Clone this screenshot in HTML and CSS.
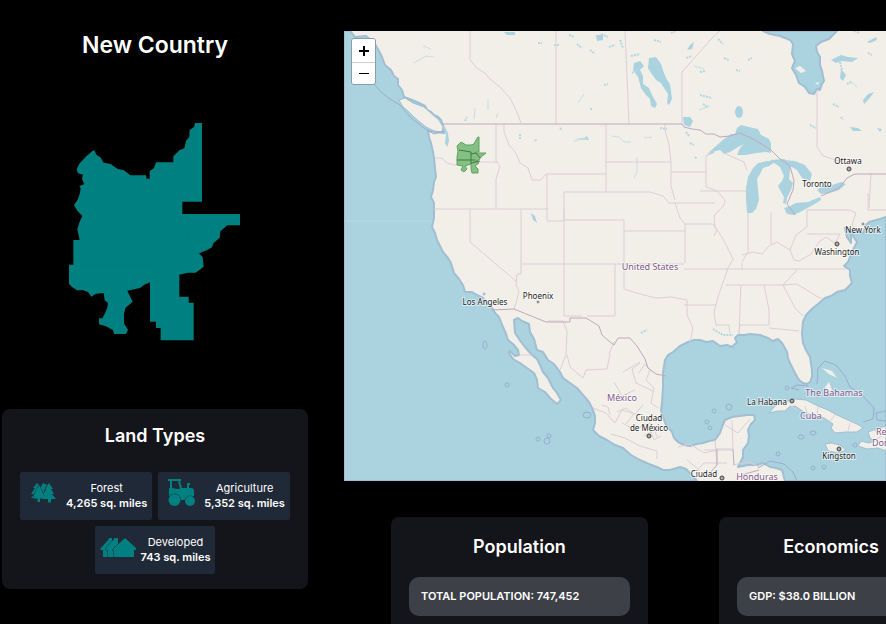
FILE: index.html
```html
<!DOCTYPE html>
<html lang="en">
<head>
<meta charset="utf-8">
<title>New Country</title>
<link rel="stylesheet" href="styles.css">
</head>
<body>
<main class="layout">
  <section class="side">
    <h1 class="title">New Country</h1>
    <svg class="shape" viewBox="57 39 516 654" role="img" aria-label="Country outline">
      <path class="fill" d="M435 39H456V275H397V312H570V346H532L511 364L509 383L490 400L486 412L470 421L447 430L458 442L461 470L437 488L414 488L388 494V560H416V578H431V691H332V654H318V635H300V517L283 524L270 534L232 542L248 575L226 594L222 612V640L234 660L228 672H192L189 660L168 649L147 643V625H157L165 610L172 593L174 579L164 571L161 549L138 551L124 560L114 546L99 540L81 541L66 531L57 521V464H70V390H89L82 358L89 335L97 318L82 302L72 285L83 269L90 249L92 235L88 228L103 223L96 207L99 194L84 190L80 178L88 161L109 139L126 124L133 121L139 134L151 142L161 158L182 162L203 177L222 181L241 196H288L290 206H299V184L312 174L318 157H370V139L388 121L403 115L408 93L418 80L419 60L432 51Z"/>
      <path class="seam" d="M150 274L210 285L225 310H305L320 335L385 325M320 335V465H75M388 325L418 380V430L450 428M305 515L385 494"/>
    </svg>
    <section class="card land">
      <h2>Land Types</h2>
      <ul class="tiles">
        <li class="tile">
          <svg class="icon" viewBox="0 0 36 36" aria-hidden="true">
            <path d="M12 5L8 10L10 10L6 16H9L6 20H12V24H14V20H17V10ZM18 5L15 11V16L18 19H22V7ZM22 6L24 9L22 16L19 13Z"/>
            <path class="cut" d="M14 7L9 17L8 20.500H12.500V24H15V20.500H20L17 13ZM24 5L20 11H21L18 17H20L17 21H23V24.500H26V21H31L27 16H29L26 11H28Z"/>
          </svg>
          <div class="fact"><span>Forest</span><strong>4,265 sq. miles</strong></div>
        </li>
        <li class="tile">
          <svg class="icon" viewBox="0 0 36 36" aria-hidden="true">
            <path fill-rule="evenodd" d="M5 1H18V3H17L19 10H24V6Q24 5 26 5H27V7H26V10H28Q31 10 31 13V18H6V10L7 10V3H5ZM9 3V10L14 11H17L15 3Z"/>
            <path d="M5 14H31L29 20L22 22H17Z"/>
            <circle class="cut" cx="11.500" cy="22" r="6"/><circle class="cut" cx="27" cy="23" r="5"/>
          </svg>
          <div class="fact"><span>Agriculture</span><strong>5,352 sq. miles</strong></div>
        </li>
        <li class="tile">
          <svg class="icon" viewBox="0 0 36 36" aria-hidden="true">
            <path class="cut" d="M0 17L9 7V6H12V25H3V18H1Z"/>
            <path class="cut" d="M6 16L14 7V6H18V25H8V18H6Z"/>
            <path class="cut" d="M13 17L25 6L36 16V18H34V24Q34 25 33 25H16Q14 25 14 24V18H12Z"/>
          </svg>
          <div class="fact"><span>Developed</span><strong>743 sq. miles</strong></div>
        </li>
      </ul>
    </section>
  </section>

  <section class="content">
    <div class="map">
      <svg class="canvas" viewBox="344 31 542 450" preserveAspectRatio="xMinYMin slice" role="img" aria-label="Map of North America">
        <rect class="ground" x="344" y="31" width="542" height="450"/>
        <!-- Pacific and Gulf of California -->
        <path class="sea" d="M344 31H350L355 37L366 36L375 44L379 51L382 57L385 65L391 70L394 76L398 79L398 85L402 90L404 97L412 100L419 103L425 106L427 110L431 112L434 115L438 117L441 120L443 125L444 133L428 131L429 137L431 143L433 152L434 158L435 168L436 177L434 182L433 190L431 197L434 203L434 210L434 218L432 227L435 233L437 240L440 246L443 252L448 258L451 263L454 273L459 279L463 285L465 292L472 292L477 295L483 298L486 302L492 308L495 313L499 317L503 327L506 334L508 340L513 344L518 350L519 355L515 356L510 351L509 353L513 359L520 363L527 368L534 373L537 380L538 388L545 392L550 398L557 404L561 400L557 393L553 388L548 378L543 372L540 365L537 359L532 355L525 347L521 342L515 333L514 320L518 318L522 321L529 324L530 332L534 339L537 350L543 352L548 360L554 364L560 372L563 378L570 383L577 388L583 395L589 402L593 410L595 416L595 423L593 430L599 436L607 440L615 445L623 448L631 455L640 460L649 464L657 467L663 470L670 470L680 467L686 469L690 473L697 481H344Z"/>
        <!-- Atlantic, Gulf of Mexico and Caribbean -->
        <path class="sea" d="M663 387L663 380L663 373L664 366L665 360L668 355L673 352L680 346L688 342L694 340L700 340L706 342L713 341L720 346L727 345L732 347L735 344L737 343L735 338L738 335L744 335L750 334L760 335L768 338L773 341L778 339L782 343L787 352L788 358L790 363L795 373L799 380L803 383L807 384L810 382L812 377L812 370L810 357L806 350L803 343L802 333L803 322L806 315L813 308L818 304L825 298L831 296L837 292L845 290L852 283L850 276L850 270L844 266L848 262L852 252L857 242L851 233L851 243L847 237L845 228L857 232L863 233L866 225L869 222L880 219L886 217V481H785L782 470L776 468L770 467L763 463L757 465L748 465L738 467L743 457L743 450L748 443L749 436L748 430L751 424L755 420L754 415L747 415L740 416L732 417L725 420L722 427L720 433L715 440L709 441L703 443L697 444L690 446L684 445L678 442L674 438L672 432L666 425L663 417L661 410L662 403Z"/>
        <!-- Hudson Bay -->
        <path class="sea" d="M763 31L770 34L780 36L790 40L793 44L792 54L795 61L792 68L796 75L799 83L805 87L809 93L814 94L817 89L820 90L822 84L824 81L822 71L820 65L820 57L817 52L816 46L821 42L829 39L834 34L837 31Z"/>
        <!-- Great Lakes and inland water -->
        <g class="lake">
          <path d="M708 153L715 147L724 139L731 134L735 134L737 128L741 125L749 127L758 129L761 135L769 139L771 143L771 153L766 152L756 153L746 155L737 155L740 148L744 144L738 147L730 152L724 154L720 150Z"/>
          <path d="M747 213L746 199L746 188L748 177L753 168L758 163L767 161L777 161L769 166L763 168L760 174L757 179L758 189L759 200L756 209L752 213Z"/>
          <path d="M770 160L784 159L791 163L790 170L789 179L793 183L791 190L787 198L786 204L783 203L784 197L780 190L778 186L782 181L784 176L780 167Z"/>
          <path d="M783 160L795 161L805 165L812 174L810 181L802 178L797 170L790 166Z"/>
          <path d="M784 208L790 206L796 203L808 202L820 197L821 200L813 205L802 211L794 215L787 214Z"/>
          <path d="M817 190L822 186L832 185L841 182L846 184L839 190L830 193L821 194Z"/>
          <path d="M649 58L656 57L661 64L664 73L667 80L670 84L671 91L672 99L669 105L667 103L668 94L664 88L661 83L656 80L651 73L648 68Z"/>
          <path d="M634 63L640 61L644 66L640 70L643 76L643 84L649 88L652 95L657 104L655 108L651 106L650 99L646 95L641 88L638 77L633 70Z"/>
          <ellipse cx="739" cy="112" rx="4" ry="6"/>
          <path d="M863 100L868 94L874 92L869 99L864 104ZM831 60L841 55L848 57L858 58L852 62L842 61L836 63ZM867 42L876 37L877 40L870 43ZM841 69L846 75L843 81L840 78ZM596 35L603 35L603 40L597 41ZM690 45L694 42L692 49L687 50ZM531 213L535 216L537 223L533 220ZM706 156L714 150L714 153ZM683 117L690 117L693 121L690 127L684 125ZM850 127L858 128L862 131L853 131ZM877 128L882 129L880 132ZM441 124L445 127L448 133L449 141L447 147L445 143L446 135ZM575 139L584 138L587 136L589 140M504 32H515V35H507Z"/>
          <path class="thin" d="M612 136L619 137L624 142L631 142M637 157V172L634 178M423 46L431 49M414 63L426 56L434 57M475 108L474 119M488 99V110M498 113L496 118M574 141L587 138M694 66L704 69M578 103L584 94M644 138L652 137M699 110L710 106M857 87L850 81"/>
          <path class="specks" d="M538 43H542M554 45H559M569 35L574 37M577 44L582 48M590 50L594 53M601 34L608 37M609 47L615 45M620 40L623 48M631 56L640 54M632 73L640 68M654 40L661 42M671 33L676 31M686 58L692 56M700 95L712 98M703 104L708 107M724 58L729 60M736 70L740 71M686 132L689 136M690 143L694 145M695 157L697 159M535 141L537 139M604 85L608 84M590 109H593M560 128L562 130M465 121L467 117M520 134V140M810 125L816 128M833 104L839 107M840 62L842 70M847 84L851 82M841 117L843 120M868 53L872 55M854 31L860 33M700 72L706 71M718 39L723 44M748 60L752 58M660 128L667 129M641 333L647 330M713 329L723 335L733 335"/>
        </g>
        <!-- Islands -->
        <g class="ground coast">
          <path d="M399 100L405 98L413 103L424 107L433 115L439 120L443 127L442 132L434 131L426 127L421 123L414 117L408 111L403 107Z"/>
          <path d="M769 413L775 406L784 402L795 399L806 400L818 406L828 410L837 415L848 420L859 425L863 428L857 432L846 432L835 433L831 428L833 424L824 418L813 415L804 412L795 406L789 407L785 411L778 411Z"/>
          <path d="M825 444L831 443L840 445L846 450L839 453L828 451Z"/>
          <path d="M886 426L879 428L868 432L870 438L875 441L869 443L861 441L858 446L867 449L878 448L886 451Z"/>
        </g>
        <path class="ground" d="M795 68L800 66L806 71L801 73ZM815 83L819 82L818 85ZM825 387L829 382L832 390L828 391ZM822 368L832 371L837 378L829 374Z"/>
        <!-- Maritime limits -->
        <path class="limit" d="M374 84L381 92L390 99L400 105L411 118L424 128L434 134L444 131M817 384L818 368L825 361L836 365L845 376L850 387L862 395L874 408L873 419L863 422M886 411L876 413L877 420L886 421M799 390L791 388L797 385L808 386M758 468L770 461L784 464L793 472L797 481"/>
        <g class="limit">
          <ellipse cx="485" cy="345" rx="2" ry="4"/><circle cx="507" cy="385" r="2"/><circle cx="538" cy="439" r="2"/><circle cx="547" cy="441" r="3"/><circle cx="549" cy="436" r="2"/><ellipse cx="587" cy="415" rx="4" ry="3"/>
          <circle cx="787" cy="388" r="2"/><circle cx="714" cy="411" r="2"/><circle cx="729" cy="407" r="3"/><circle cx="707" cy="422" r="2"/><circle cx="710" cy="428" r="2"/><circle cx="778" cy="454" r="2"/><ellipse cx="801" cy="437" rx="3" ry="2"/><ellipse cx="813" cy="433" rx="3" ry="2"/><circle cx="813" cy="468" r="2"/><circle cx="824" cy="467" r="2"/><circle cx="855" cy="445" r="2"/><circle cx="484" cy="294" r="1"/>
        </g>
        <!-- State and province lines -->
        <path class="state" d="M470 31V60L477 68L486 74L490 79L501 88L510 98L514 106L518 115L521 123M556 31V124M625 31L629 124M682 124V72L713 37L720 31M817 90V147L823 156L839 161M435 158L442 158L447 163L455 165L473 163L481 162H498M496 124V161L500 166L496 179V209M434 209H548M504 124V132L509 145L516 153L520 163L528 168L532 180L541 180L546 174M547 174V221H564V209M547 174H606M606 124V192M606 162H671M606 192H564V249M665 124V130L669 145L671 162V186L675 200M521 209V264M470 209V242L517 282M521 264H684M521 264V274H517L516 285L519 291L516 303L514 309M564 249V316M564 316H582M615 264V316H587M624 231V289L640 294L656 298L671 297L687 300M564 220H624V231M624 231H685M606 192H650L663 196L669 203H715M671 172H706M675 203L680 218L685 224V263M685 224H713L717 230L714 236M706 187L717 191L725 200L724 205L714 216L715 227L723 239L733 259L728 268L718 297L714 312L716 325H729L730 333M684 269H726M684 305H716M687 300V315L693 328L690 342M724 153L735 158L744 162L747 170M706 187V156L713 150M700 191H746M748 213V252L742 262M771 212V245L777 242L790 250L796 235L807 227V210M742 255L753 252L762 254L770 245M807 234H840L835 243L826 237L819 242L811 254L799 261L794 260L790 250M726 269H847M742 269V263M726 285H783L797 270M764 285L769 310V325H740L739 334M741 285L739 334M769 328L799 331M783 285L795 308L803 316M783 285L797 284L818 297L823 299M807 210H850L856 213L852 225L857 231M868 193V210H886M871 173L869 208M548 321H563L567 331L566 355L560 370M567 355L570 367L583 378L586 370L607 369L610 354M640 363L632 369L636 383L653 391M614 382L622 396L635 390M593 408L606 413L615 423L622 410L635 414L643 405M622 423L633 429L650 423L658 438M611 434L625 438L640 446L657 451L657 459M678 447L690 444L704 453L717 450M520 355L532 355M696 471L704 463H727M715 440L717 465M732 420L733 449H716M704 450H733M733 465L749 462L759 467M750 419L738 433L725 425M790 405L798 411M805 406L807 413M818 407L817 416M835 415L830 421M850 423L848 431"/>
        <path class="state" d="M609 354L614 342M639 373L645 364L650 370L646 380L654 388M623 372L640 362M654 388L651 403L658 408M602 405L608 407L610 415M617 412L626 408L634 414L626 424M644 436L651 432L654 440L661 436M687 460L700 471M874 430L882 436L875 440"/>
        <!-- National borders -->
        <path class="border" d="M443 124H682L684 127L692 129L700 130L706 134L714 134L720 137L730 136L740 133L755 140L771 150L779 158L790 166L794 181L793 190L787 204L795 215M821 196L839 188L847 178L855 174H886M492 310L514 309L546 322L570 322V318L586 318L599 326L602 335L610 342L614 345L618 338H630L637 346L645 359L648 368L656 374L666 376M717 449V465L709 474M733 449L734 465M759 470L745 474L736 479"/>
        <!-- Shape drawn on the map -->
        <g class="region">
          <path d="M478 137H479V152H476V153H486L481 157L479 160L475 161L479 163L475 166L478 169V173H472L471 169V164L465 166L467 169L464 172L461 170L463 166L457 165V157L458 151L457 146L461 142L466 145H471L474 144L476 140Z"/>
          <path class="divide" d="M459 150L471 152V164M457 160H475M471 154L476 153L480 158M471 163L480 161"/>
        </g>
        <path class="tile-edge" d="M344 221H432"/>
        <g class="city">
          <text x="485" y="305">Los Angeles</text><text x="538" y="299">Phoenix</text><text x="848" y="164">Ottawa</text><text x="817" y="187">Toronto</text><text x="863" y="233">New York</text><text x="837" y="255">Washington</text>
          <text x="649" y="421">Ciudad</text><text x="649" y="431">de México</text><text x="767" y="405">La Habana</text><text x="839" y="459">Kingston</text><text x="704" y="477">Ciudad</text>
        </g>
        <g class="country">
          <text x="650" y="270">United States</text><text x="622" y="401">México</text><text x="834" y="396">The Bahamas</text><text x="811" y="419">Cuba</text><text x="757" y="480">Honduras</text><text class="from-left" x="876" y="435">República</text><text class="from-left" x="872" y="446">Dominicana</text>
        </g>
        <g class="capital">
          <circle cx="849" cy="169" r="2"/><circle cx="837" cy="244" r="2"/><circle cx="649" cy="436" r="2"/><circle cx="792" cy="401" r="2"/><circle cx="839" cy="449" r="2"/><circle cx="722" cy="478" r="2"/>
        </g>
        <g class="town"><circle cx="538" cy="302" r="1"/><circle cx="863" cy="224" r="1"/></g>
      </svg>
      <div class="zoom">
        <button type="button" aria-label="Zoom in"><svg viewBox="0 0 10 10" aria-hidden="true"><path d="M0 5H10M5 0V10"/></svg></button>
        <button type="button" aria-label="Zoom out"><svg class="minus" viewBox="0 0 10 10" aria-hidden="true"><path d="M0 4.500H10"/></svg></button>
      </div>
    </div>
    <div class="stats">
      <section class="card population"><h2>Population</h2><p class="stat">Total Population: 747,452</p></section>
      <section class="card economics"><h2>Economics</h2><p class="stat">GDP: $38.0 Billion</p></section>
    </div>
  </section>
</main>
</body>
</html>
```

FILE: styles.css
```css
* { box-sizing: border-box; }

body {
  margin: 0;
  overflow: hidden;
  background: #000;
  color: #fff;
  font-family: Inter, sans-serif;
}

h1, h2, p, ul { margin: 0; padding: 0; }

.layout {
  display: grid;
  grid-template-columns: 306px minmax(0, 1fr);
  column-gap: 36px;
  align-items: start;
  padding: 31px 0 0 2px;
}

.side {
  display: flex;
  flex-direction: column;
  align-items: center;
}

.title {
  font-size: 23px;
  line-height: 28px;
  font-weight: 600;
}

.shape { width: 172px; height: 218px; margin: 64px 0 68px; }
.shape .fill { fill: #008080; }
.shape .seam { fill: none; stroke: #047b7b; stroke-width: 2; }

.card {
  padding: 18px;
  border-radius: 8px;
  background: #14151a;
}

.card h2 {
  font-size: 18px;
  line-height: 24px;
  font-weight: 600;
  text-align: center;
}

.land { width: 100%; padding: 15px 12px; }

.tiles {
  display: flex;
  flex-wrap: wrap;
  justify-content: center;
  gap: 6px;
  margin-top: 24px;
  list-style: none;
}

.tile {
  display: flex;
  align-items: center;
  gap: 5px;
  padding: 6px 5px;
  border-radius: 2px;
  background: #1f2937;
}

.icon { width: 36px; height: 36px; fill: #008080; }
.icon .cut { stroke: #1f2937; stroke-width: 1; paint-order: stroke; }

.fact {
  display: flex;
  flex-direction: column;
  font-size: 11px;
  line-height: 15px;
  text-align: center;
}

.fact strong { font-weight: 600; }

.map { position: relative; height: 450px; overflow: hidden; }
.canvas { display: block; width: 100%; height: 100%; }
.ground { fill: #f2efe9; }
.sea { fill: #aad3df; stroke: #a1bed2; stroke-width: 2; stroke-linejoin: round; }
.coast { stroke: #a1bed2; stroke-width: 1; }
.lake { fill: #aad3df; }
.lake .thin { fill: none; stroke: #c4dfe5; stroke-width: 1; }
.lake .specks { fill: none; stroke: #b3d8e2; stroke-width: 2; stroke-dasharray: 2 1; }
.state, .border, .limit { fill: none; stroke-linejoin: round; }
.state { stroke: #dacfd7; stroke-width: 1; }
.border { stroke: #c0a8bc; stroke-width: 1; }
.limit { stroke: #98aecd; stroke-width: 1; }
.tile-edge { stroke: #b4d8e2; }
.region { fill: #84c084; stroke: #5fa35f; stroke-width: 1; }
.region .divide { fill: none; stroke: #3f7a3f; }

.city, .country {
  font-family: "Noto Sans", sans-serif;
  text-anchor: middle;
  stroke: #fff;
  stroke-opacity: 0.6;
  stroke-width: 2;
  stroke-linejoin: round;
  paint-order: stroke;
}

.city { font-size: 8px; fill: #222; }
.country { font-size: 9px; fill: #83588a; }
.country .from-left { text-anchor: start; }
.capital { fill: #aaa; stroke: #444; stroke-width: 1; }
.town { fill: #fff; stroke: #777; stroke-width: 1; }

.zoom {
  position: absolute;
  top: 7px;
  left: 7px;
  width: 25px;
  border: 1px solid #8c9ea5;
  border-radius: 3px;
  overflow: hidden;
}

.zoom button {
  display: flex;
  align-items: center;
  justify-content: center;
  width: 100%;
  height: 23px;
  padding: 0;
  border: 0;
  background: #fff;
}

.zoom button + button { height: 22px; border-top: 1px solid #ccc; }
.zoom svg { width: 10px; height: 10px; stroke: #000; stroke-width: 2; }
.zoom .minus { stroke-width: 1; }

.stats {
  display: flex;
  gap: 71px;
  padding: 36px 0 0 47px;
}

.population { flex: 0 0 257px; }
.economics { flex: 0 0 224px; }

.stat {
  margin-top: 18px;
  padding: 12px;
  border-radius: 10px;
  background: #3d4147;
  font-size: 11px;
  line-height: 15px;
  font-weight: 600;
  text-transform: uppercase;
}
```
